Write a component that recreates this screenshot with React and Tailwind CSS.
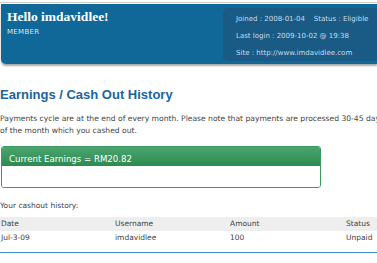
export default function App() {
  const small = { fontFamily: '"DejaVu Sans", Verdana, sans-serif' };
  return (
    <div className="w-[377px] h-[263px] overflow-hidden bg-white text-[#333]" style={small}>
      <div className="pt-[2px]">
        <div className="border-t border-[#ccc] pt-[1px]">
          <div className="ml-[1px] h-[60px] bg-[#0f6898] rounded-bl-[5px] shadow-[0_2px_2px_rgba(0,0,0,0.35)] flex justify-between">
            <div className="pl-[6px] pt-[5px]">
              <div className="text-[13.5px] leading-[16px] font-bold text-white" style={{ fontFamily: '"Liberation Serif", "Times New Roman", serif' }}>Hello imdavidlee!</div>
              <div className="text-[7px] leading-[10px] text-[#d6e6f0] mt-[2px] tracking-[0.3px]">MEMBER</div>
            </div>
            <div className="mt-[4px] mb-[3px] w-[154px] bg-[#1a5b85] rounded-l-[5px] pl-[13px] pt-[3px] text-[7px] leading-[17px] text-[#c9dceb] whitespace-nowrap overflow-hidden">
              <div>Joined : 2008-01-04 &nbsp;&nbsp;&nbsp;Status : Eligible</div>
              <div>Last login : 2009-10-02 @ 19:38</div>
              <div>Site : http://www.imdavidlee.com</div>
            </div>
          </div>
        </div>
      </div>
      <h1 className="mt-[22px] text-[13px] leading-[18px] font-bold text-[#1a64a0]" style={{ fontFamily: '"Liberation Sans", Arial, sans-serif' }}>Earnings / Cash Out History</h1>
      <p className="mt-[9px] text-[7.6px] leading-[12px] whitespace-nowrap text-[#444] overflow-hidden">Payments cycle are at the end of every month. Please note that payments are processed 30-45 days after the end<br />of the month which you cashed out.</p>
      <div className="mt-[9px] ml-[1px] w-[320px] h-[42px] border border-[#3c9a5f] rounded-[3px] overflow-hidden flex flex-col">
        <div className="h-[19px] bg-gradient-to-b from-[#4aa46f] to-[#2c8b50] text-white text-[8.6px] leading-[10px] pt-[7px] pl-[7px]">Current Earnings = RM20.82</div>
        <div className="flex-1 bg-white" />
      </div>
      <div className="mt-[13px] text-[7.5px] leading-[10px] text-[#444]">Your cashout history:</div>
      <div className="mt-[6px] text-[7.5px] text-[#444]">
        <div className="h-[14px] bg-[#eeeeee] flex items-center">
          <div className="w-[115px] pl-[1px]">Date</div>
          <div className="w-[115px]">Username</div>
          <div className="w-[116px]">Amount</div>
          <div>Status</div>
        </div>
        <div className="h-[14px] flex items-center">
          <div className="w-[115px] pl-[1px]">Jul-3-09</div>
          <div className="w-[115px]">imdavidlee</div>
          <div className="w-[116px]">100</div>
          <div>Unpaid</div>
        </div>
        <div className="mt-[7px] h-[1px] bg-[#3d8fc4]" />
      </div>
    </div>
  );
}
